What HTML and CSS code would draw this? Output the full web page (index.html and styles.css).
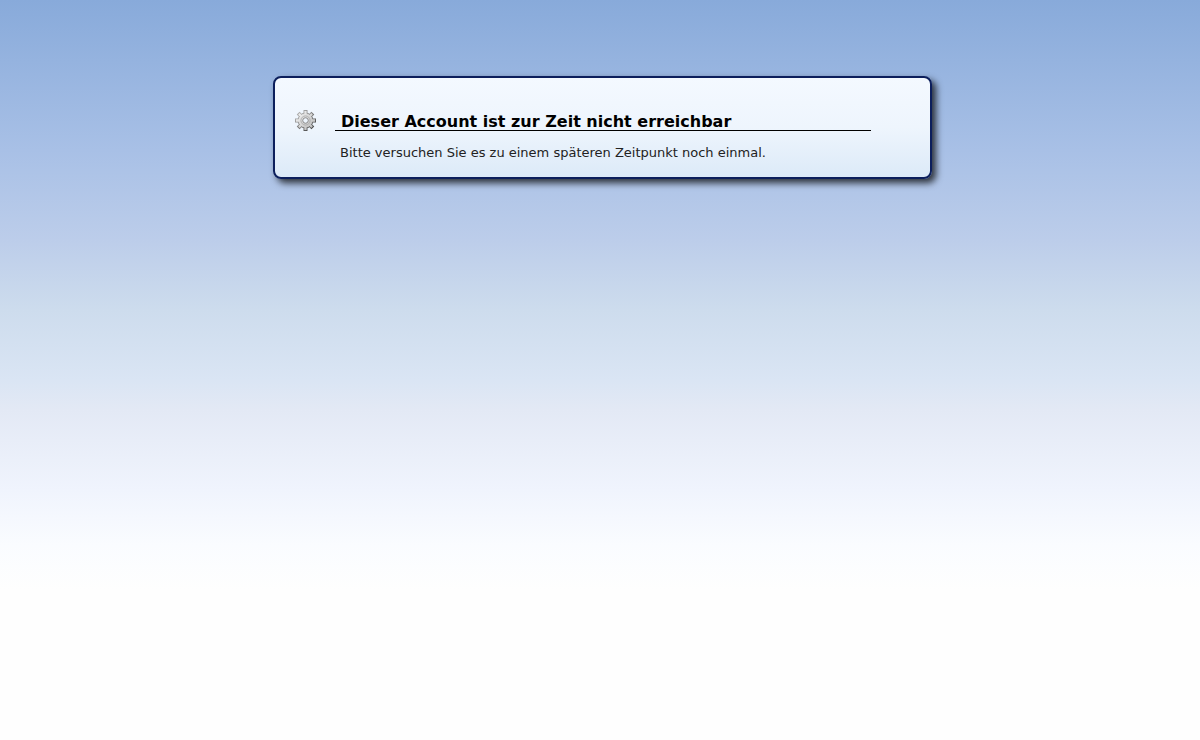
FILE: index.html
```html
<!DOCTYPE html>
<html lang="de">
<head>
<meta charset="utf-8">
<meta name="viewport" content="width=device-width, initial-scale=1">
<title>Dieser Account ist zur Zeit nicht erreichbar</title>
<link rel="stylesheet" href="styles.css">
</head>
<body>
<main class="notice">
  <svg class="gear" viewBox="0 0 22 22" aria-hidden="true">
    <defs>
      <linearGradient id="metal" gradientUnits="userSpaceOnUse" x1="3" y1="3" x2="19" y2="19">
        <stop offset="0" stop-color="#f2f2f2"/>
        <stop offset="1" stop-color="#bcbcbc"/>
      </linearGradient>
      <linearGradient id="rim" gradientUnits="userSpaceOnUse" x1="3" y1="3" x2="19" y2="19">
        <stop offset="0" stop-color="#b0b0b0"/>
        <stop offset="1" stop-color="#484848"/>
      </linearGradient>
    </defs>
    <g stroke="url(#rim)" fill="url(#rim)">
      <path stroke-width="4.200" d="M11.010 0 11 22M0 11.010 22 11M3.300 3.300l15.400 15.410M18.700 3.300 3.300 18.710"/>
      <circle cx="11" cy="11" r="7.800"/>
    </g>
    <g stroke="url(#metal)" fill="url(#metal)">
      <path stroke-width="2.400" d="M11.010 1 11 21M1 11.010 21 11M4.100 4.100l13.800 13.810M17.900 4.100 4.100 17.910"/>
      <circle cx="11" cy="11" r="6.900"/>
    </g>
    <circle cx="11" cy="11" r="4.800" fill="none" stroke="#adadad"/>
    <circle cx="11" cy="11" r="2.900" fill="#edf4fc" stroke="#858585"/>
  </svg>
  <div class="message">
    <h1 class="title">Dieser Account ist zur Zeit nicht erreichbar</h1>
    <p class="text">Bitte versuchen Sie es zu einem späteren Zeitpunkt noch einmal.</p>
  </div>
</main>
</body>
</html>
```
FILE: styles.css
```css
* { box-sizing: border-box; }

body {
  min-height: 100vh;
  margin: 0;
  padding: 76px 8px 0 13px;
  background: #fefefe linear-gradient(#88aada 0, #a8c0e6 150px, #bccdea 240px, #cddced 310px, #dae5f4 380px, #e3e9f5 410px, #f0f4fd 490px, #fafcff 545px, #fefefe 590px) no-repeat;
  font-family: Verdana, "DejaVu Sans", sans-serif;
  color: #000;
}

.notice {
  display: flex;
  gap: 19px;
  max-width: 659px;
  margin: 0 auto;
  padding: 32px 59px 15px 20px;
  border: 2px solid #0c1f5c;
  border-radius: 8px;
  background: linear-gradient(#f4f9ff, #eef5fd 50%, #dceaf8);
  box-shadow: 4px 4px 7px rgba(0, 0, 0, 0.75);
}

.gear {
  flex: none;
  width: 21px;
  height: 21px;
}

.message { flex: 1; }

.title {
  margin: 0;
  padding: 4px 0 0 6px;
  border-bottom: 1px solid #000;
  font-size: 16px;
  line-height: 16px;
}

.text {
  margin: 13px 0 0;
  padding-left: 5px;
  color: #222;
  font-size: 13px;
  line-height: 18px;
}
```
